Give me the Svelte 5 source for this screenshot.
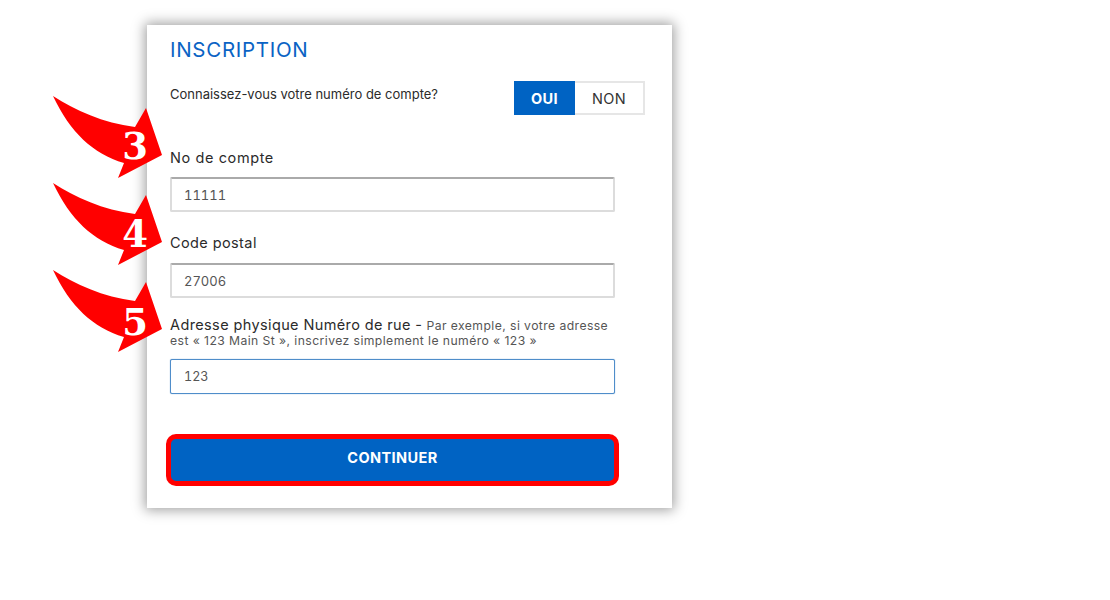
<script>
  const arrows = [
    { n: '3', top: 96, y: 63 },
    { n: '4', top: 183, y: 64 },
    { n: '5', top: 270, y: 65 }
  ];
</script>

<main class="page">
  <section class="card">
    {#each arrows as a}
      <svg class="arrow" style="top:{a.top - 25}px" width="112" height="84" viewBox="0 0 112 84" aria-hidden="true">
        <path d="M0 0C22 14 50 27 82 31L93 12L109 59L65 82L71 67C40 58 17 36 0 0Z" fill="#ff0000" />
        <text x="82" y={a.y} text-anchor="middle">{a.n}</text>
      </svg>
    {/each}

    <h1>INSCRIPTION</h1>

    <div class="question">
      <p>Connaissez-vous votre numéro de compte?</p>
      <div class="toggle">
        <button class="on">OUI</button>
        <button class="off">NON</button>
      </div>
    </div>

    <label class="first">
      <span class="lbl">No de compte</span>
      <input value="11111" />
    </label>

    <label class="second">
      <span class="lbl">Code postal</span>
      <input value="27006" />
    </label>

    <label class="third">
      <span class="lbl long"><span class="strong">Adresse physique Numéro de rue -</span>{' '}<small>Par exemple, si votre adresse est « 123 Main St », inscrivez simplement le numéro « 123 »</small></span>
      <input class="focus" value="123" />
    </label>

    <div class="action"><button class="go">CONTINUER</button></div>
  </section>
</main>

<style>
  :global(body) { margin: 0; background: #fff; }
  .page { width: 1110px; height: 600px; padding: 25px 0 0 147px; box-sizing: border-box; overflow: hidden; font-family: Inter, "Noto Sans", sans-serif; color: #333; }
  .card { position: relative; box-sizing: border-box; width: 525px; height: 483px; background: #fff; padding: 13px 27px 0 23px; box-shadow: 0 0 12px 2px rgba(0,0,0,.38); }
  .arrow { position: absolute; left: -94px; z-index: 2; overflow: visible; }
  .arrow text { font-family: "DejaVu Serif", serif; font-weight: 700; font-size: 37px; fill: #fff; }
  h1 { margin: 0; font-size: 20.5px; line-height: 24px; font-weight: 400; color: #0a63c4; letter-spacing: .7px; }
  .question { display: flex; justify-content: space-between; margin-top: 19px; }
  .question p { margin: 0; font-size: 13px; line-height: 28px; font-weight: 400; color: #2b2b2b; margin-top: -1px; }
  .toggle { display: flex; height: 34px; }
  .toggle button { font: inherit; font-size: 14.5px; padding: 0; border-radius: 0; letter-spacing: .3px; }
  .on { width: 61px; background: #0063c3; color: #fff; font-weight: 700 !important; border: 0; }
  .off { width: 70px; background: #fff; color: #333; border: 2px solid #e6e6e6; border-left: 0; }
  label { display: block; width: 445px; }
  .lbl { display: block; font-size: 14.5px; font-weight: 400; line-height: 20px; color: #2b2b2b; letter-spacing: .6px; }
  .first { margin-top: 33px; }
  .second { margin-top: 21px; }
  .second .lbl { letter-spacing: .4px; margin-bottom: 10px; }
  .third { margin-top: 20px; }
  .first .lbl { margin-bottom: 9px; }
  .long { line-height: 14px !important; margin-bottom: 11px; letter-spacing: 0 !important; }
  .strong { font-size: 14.5px; font-weight: 400; letter-spacing: .38px; }
  small { font-size: 12.2px; color: #555; letter-spacing: .42px; }
  input { display: block; box-sizing: border-box; width: 445px; height: 35px; padding: 0 12px; font: inherit; font-size: 13px; font-variant-numeric: tabular-nums; color: #555; background: #fff; border: 2px solid #dcdcdc; border-top-color: #aaa; border-radius: 2px; outline: 0; }
  input.focus { border: 1px solid #4f8dca; padding: 0 13px; box-shadow: 0 0 1px #4f8dca; font-size: 12.6px; }
  .action { margin-top: 40px; margin-left: -4px; }
  .go { display: block; box-sizing: border-box; width: 453px; height: 52px; background: #0063c3; border: 5px solid #ff0000; border-radius: 10px; color: #fff; font: inherit; font-weight: 700; font-size: 14.5px; letter-spacing: .4px; padding: 0 0 5px; }
</style>
